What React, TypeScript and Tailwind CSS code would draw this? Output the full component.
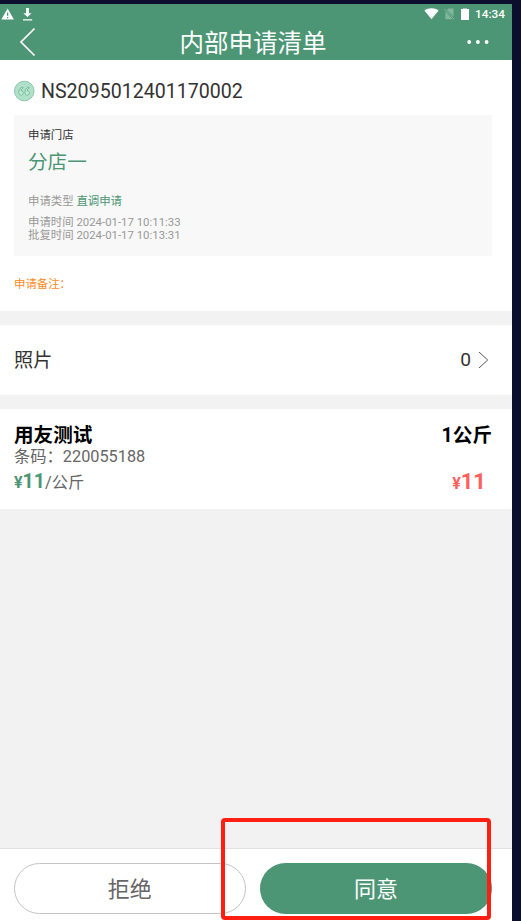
import React from "react";

function StatusBar() {
  return (
    <div className="flex h-[19px] items-center justify-between pr-[7px] text-white">
      <div className="flex items-center">
        <svg className="ml-px block" width="14" height="14" viewBox="0 0 14 14">
          <path d="M6.6 1.6 12.9 12.4H.3Z" fill="white" />
          <path d="M6.6 5.4v3.4M6.6 10v1.3" stroke="#4d9675" strokeWidth="1.3" />
        </svg>
        <svg className="ml-[7px] block" width="12" height="14" viewBox="0 0 12 14">
          <path d="M4.1 .9h2.8v5.4h2.7L5.5 10.1 1.4 6.3h2.7ZM1 12.2h9.2v1.3H1z" fill="white" />
        </svg>
      </div>
      <div className="flex items-center pt-px">
        <svg className="block" width="15" height="12" viewBox="0 0 15 12">
          <path d="M7.5 11.3.4 2.4C4.2-.6 10.8-.6 14.6 2.4Z" fill="white" />
        </svg>
        <svg className="ml-[5px] block" width="11" height="12" viewBox="0 0 11 12">
          <path d="M4.3 .4H9.5v8.4L2.8 1.9ZM1.4 3.4 8.8 11.2H1.4Z" fill="#82b59d" />
          <path d="M.3 .9l9.8 10.3" stroke="#82b59d" strokeWidth="1" />
        </svg>
        <svg className="ml-[6px] block" width="8" height="12" viewBox="0 0 8 12">
          <path d="M2 0h4v1H2z" fill="#a6cab9" />
          <path d="M0 1h8v11H0z" fill="white" />
        </svg>
        <span className="ml-[6px] w-[30px] text-[11.8px] leading-[19px] font-medium whitespace-nowrap">14:34</span>
      </div>
    </div>
  );
}

function Header() {
  return (
    <header className="h-14 bg-[#4d9675] text-white">
      <StatusBar />
      <div className="flex h-[37px] items-center justify-between pr-[23px] pl-[19px]">
        <svg className="block" width="18" height="30" viewBox="0 0 18 30">
          <path d="M15.5 1.5 2 15l13.5 13.5" fill="none" stroke="white" strokeWidth="1.7" />
        </svg>
        <h1 className="ml-[2px] pt-[4px] text-[24.5px] leading-[37px] font-normal">内部申请清单</h1>
        <svg className="block" width="22" height="6" viewBox="0 0 22 6">
          <circle cx="2.2" cy="3" r="1.9" fill="white" />
          <circle cx="10.9" cy="3" r="1.9" fill="white" />
          <circle cx="19.6" cy="3" r="1.9" fill="white" />
        </svg>
      </div>
    </header>
  );
}

function QuoteBadge() {
  return (
    <svg className="block" width="21" height="22" viewBox="0 0 21 22">
      <circle cx="10.3" cy="11" r="9.8" fill="#b1e0ca" stroke="#8ac9aa" strokeWidth="1" />
      <g fill="#c4e9d7" stroke="#67b28d" strokeWidth=".8">
        <path d="M8.8 7c-2.6.6-3.9 2.9-3.9 5.4 0 1.8.8 2.8 2.1 2.8s2.2-1 2.2-2.3-.9-2.2-2.2-2.1c.1-1.3.8-2.2 2-2.7Z" />
        <path d="M14.9 7c-2.6.6-3.9 2.9-3.9 5.4 0 1.8.8 2.8 2.1 2.8s2.2-1 2.2-2.3-.9-2.2-2.2-2.1c.1-1.3.8-2.2 2-2.7Z" />
      </g>
    </svg>
  );
}

function RequestInfo() {
  return (
    <section className="h-[250.5px] bg-white px-3.5">
      <div className="flex h-[55px] items-center gap-1.5 pt-[6px]">
        <QuoteBadge />
        <span className="pt-[2px] text-[19.6px] leading-6 text-[#333]">NS2095012401170002</span>
      </div>
      <div className="mr-1.5 h-[141px] bg-[#f8f8f8] px-3.5 pt-3 text-[11.4px] text-[#999]">
        <p className="h-4 leading-4 text-[#333]">申请门店</p>
        <p className="mt-1.5 h-7 text-[19.6px] leading-7 text-[#4d9675]">分店一</p>
        <p className="mt-[16px] h-4 leading-4">
          申请类型 <span className="text-[#4d9675]">直调申请</span>
        </p>
        <p className="mt-[7px] h-[13px] leading-[13px]">申请时间 2024-01-17 10:11:33</p>
        <p className="h-[13px] leading-[13px]">批复时间 2024-01-17 10:13:31</p>
      </div>
      <p className="pt-5 text-[11.4px] leading-4 text-[#ff8a1e]">申请备注：</p>
    </section>
  );
}

function PhotoRow() {
  return (
    <section className="mt-3.5 flex h-[70.5px] items-center justify-between bg-white pr-[23px] pl-3.5 text-[19.2px] text-[#333]">
      <span className="pt-[3px]">照片</span>
      <span className="flex items-center gap-[7px]">
        <span className="pt-[2px]">0</span>
        <svg className="block" width="11" height="18" viewBox="0 0 11 18">
          <path d="M1 1l8.7 8L1 17" fill="none" stroke="#555" strokeWidth="1" />
        </svg>
      </span>
    </section>
  );
}

function ProductRow() {
  return (
    <section className="mt-[13.5px] h-[100.5px] bg-white pt-[15px] pr-5 pl-3.5">
      <div className="flex h-6 justify-between text-[19.6px] leading-6 font-bold text-black">
        <span>用友测试</span>
        <span>1公斤</span>
      </div>
      <p className="-mt-px h-5 text-[16.3px] leading-5 text-[#666]">条码：220055188</p>
      <div className="flex h-7 justify-between leading-7">
        <span className="pt-px text-[16.3px] text-[#666]">
          <b className="text-[16px] text-[#4d9675]">¥</b>
          <b className="text-[19.6px] text-[#4d9675]">11</b>/公斤
        </span>
        <b className="pt-px pr-[6px] text-[22px] text-[#ff5f5c]">
          <span className="text-[16px]">¥</span>11
        </b>
      </div>
    </section>
  );
}

function Footer() {
  return (
    <footer className="flex h-[73px] gap-3.5 border-t border-[#e2e2e2] bg-white px-[13.5px] pt-[13.5px] text-[22px]">
      <button className="h-[51.5px] w-[232.5px] rounded-full border border-[#c4c4c4] pt-[2px] text-[#666]">拒绝</button>
      <button className="h-[51.5px] w-[232px] rounded-full bg-[#4d9675] pt-[2px] text-white">同意</button>
    </footer>
  );
}

export default function App() {
  return (
    <div className="relative h-[921px] w-[521px] overflow-hidden bg-[#0c0e2e] pt-1 font-['Roboto','Noto_Sans_CJK_SC',sans-serif]">
      <div className="flex h-[917px] w-[512px] flex-col bg-[#f2f2f2]">
        <Header />
        <RequestInfo />
        <PhotoRow />
        <ProductRow />
        <div className="flex-1" />
        <Footer />
      </div>
      <div className="absolute top-[818px] left-[221px] h-[102px] w-[270px] rounded border-4 border-[#ff1f12]" />
    </div>
  );
}
